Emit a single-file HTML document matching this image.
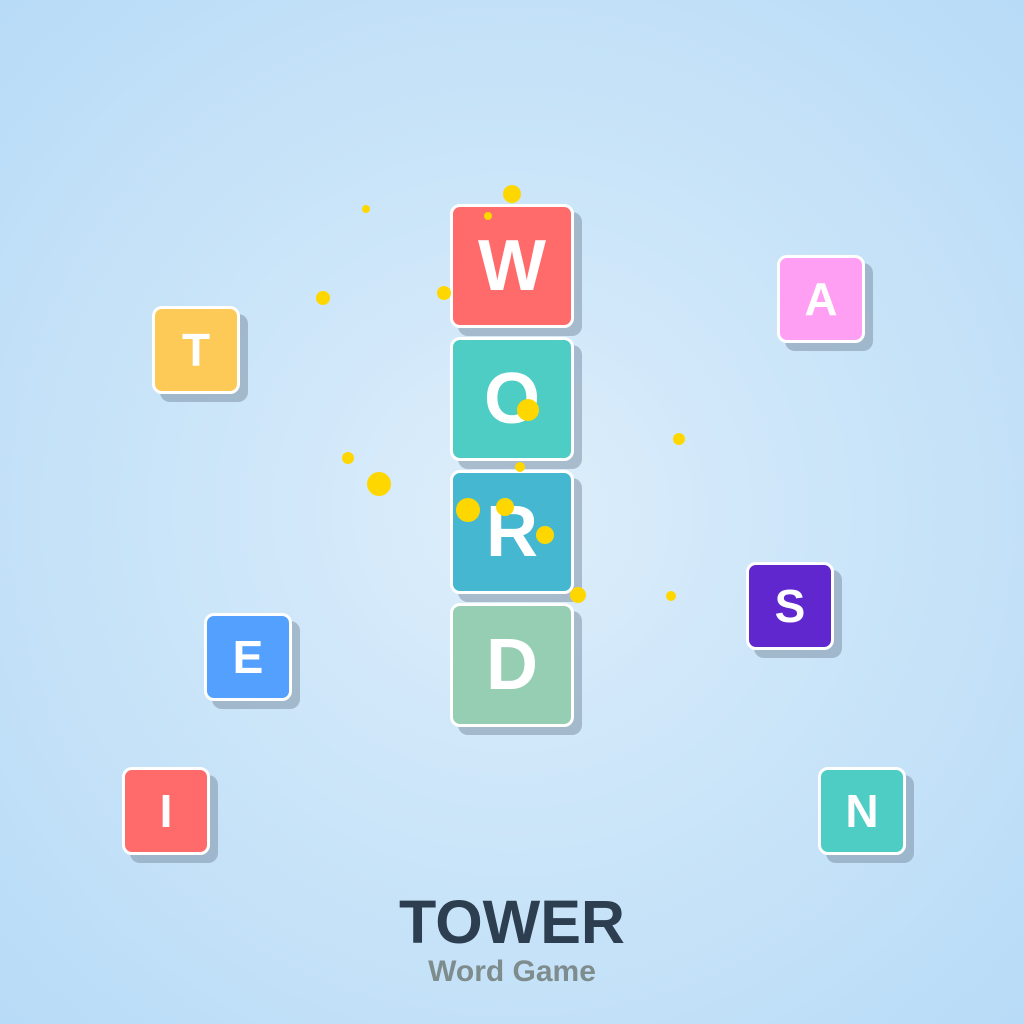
<!DOCTYPE html>
<html><head><meta charset="utf-8"><style>
html,body{margin:0;padding:0}
body{width:1024px;height:1024px;position:relative;overflow:hidden;background:radial-gradient(circle at 50% 50%,#deeefb 0%,#cde6f9 40%,#b8dbf7 100%);font-family:"Liberation Sans",Arial,sans-serif}
.t{position:absolute;box-sizing:border-box;border:3px solid #fff;border-radius:10px;color:#fff;font-weight:bold;display:flex;align-items:center;justify-content:center;box-shadow:8px 8px 0 rgba(120,140,160,0.5)}
.b{width:124px;height:124px;font-size:72px;left:450px}
.s{width:88px;height:88px;font-size:46px}
.d{position:absolute;border-radius:50%;background:#ffd700}
.title{position:absolute;left:0;width:1024px;text-align:center;font-weight:bold}
</style></head><body>
<div class="t b" style="top:204px;background:#ff6b6b">W</div>
<div class="t b" style="top:337px;background:#4ecdc4">O</div>
<div class="t b" style="top:470px;background:#45b7d1">R</div>
<div class="t b" style="top:603px;background:#96ceb4">D</div>
<div class="t s" style="left:152px;top:306px;background:#feca57">T</div>
<div class="t s" style="left:777px;top:255px;background:#ff9ff3">A</div>
<div class="t s" style="left:204px;top:613px;background:#54a0ff">E</div>
<div class="t s" style="left:746px;top:562px;background:#5f27cd">S</div>
<div class="t s" style="left:122px;top:767px;background:#ff6b6b">I</div>
<div class="t s" style="left:818px;top:767px;background:#4ecdc4">N</div>
<div class="d" style="left:503px;top:185px;width:18px;height:18px"></div>
<div class="d" style="left:484px;top:212px;width:8px;height:8px"></div>
<div class="d" style="left:362px;top:205px;width:8px;height:8px"></div>
<div class="d" style="left:316px;top:291px;width:14px;height:14px"></div>
<div class="d" style="left:437px;top:286px;width:14px;height:14px"></div>
<div class="d" style="left:517px;top:399px;width:22px;height:22px"></div>
<div class="d" style="left:673px;top:433px;width:12px;height:12px"></div>
<div class="d" style="left:342px;top:452px;width:12px;height:12px"></div>
<div class="d" style="left:367px;top:472px;width:24px;height:24px"></div>
<div class="d" style="left:515px;top:462px;width:10px;height:10px"></div>
<div class="d" style="left:456px;top:498px;width:24px;height:24px"></div>
<div class="d" style="left:496px;top:498px;width:18px;height:18px"></div>
<div class="d" style="left:536px;top:526px;width:18px;height:18px"></div>
<div class="d" style="left:570px;top:587px;width:16px;height:16px"></div>
<div class="d" style="left:666px;top:591px;width:10px;height:10px"></div>
<div class="title" style="top:888px;font-size:61px;line-height:68px;color:#2c3e50">TOWER</div>
<div class="title" style="top:954px;font-size:30px;line-height:36px;color:#7f8c8d">Word Game</div>
</body></html>
